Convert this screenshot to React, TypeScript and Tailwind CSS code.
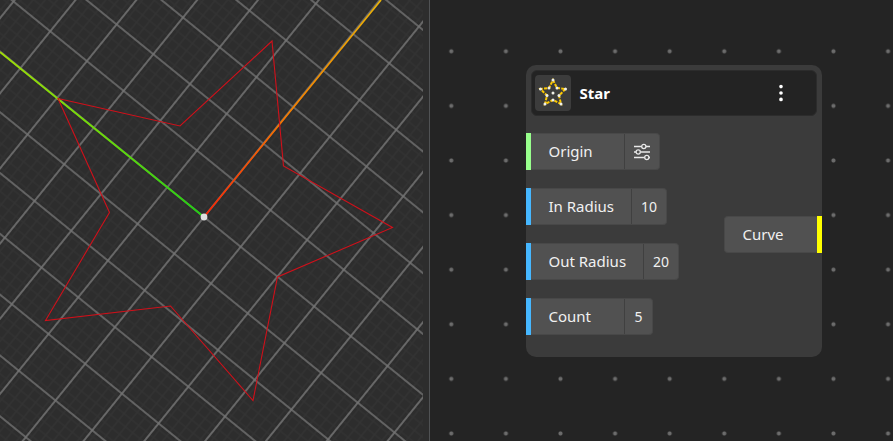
import { EllipsisVertical } from 'lucide-react';

type Port = {
    label: string;
    color: string;
    value?: string;
};

const inputs: Port[] = [
    { label: 'Origin', color: 'bg-[#98ff8c]' },
    { label: 'In Radius', color: 'bg-[#46b7ff]', value: '10' },
    { label: 'Out Radius', color: 'bg-[#46b7ff]', value: '20' },
    { label: 'Count', color: 'bg-[#46b7ff]', value: '5' },
];

const GRID = 'matrix(36.7 29.8 29.7 -36.7 204 217)';

function Viewport() {
    return (
        <div className="w-[48.15%] shrink-0 border-r border-[#505254] bg-[#2d2d2d] pr-1.5">
            <svg
                className="block h-full w-full"
                viewBox="0 0 423 441"
                preserveAspectRatio="xMinYMin slice"
                role="img"
                aria-label="Star curve"
            >
                <defs>
                    <pattern id="minor" width="0.2" height="0.2" patternUnits="userSpaceOnUse" patternTransform={GRID}>
                        <path d="M0 0.1H0.2M0.1 0V0.2" stroke="#323232" strokeWidth="0.034" />
                    </pattern>
                    <pattern id="major" width="1" height="1" patternUnits="userSpaceOnUse" patternTransform={GRID}>
                        <path d="M0 0H1M0 0V1M0 1H1M1 0V1" stroke="#747474" strokeWidth="0.034" />
                    </pattern>
                    <linearGradient id="axisX" gradientUnits="userSpaceOnUse" x1="204" y1="217" x2="381" y2="0">
                        <stop offset="0" stopColor="#ff2000" />
                        <stop offset="0.5" stopColor="#f48000" />
                        <stop offset="1" stopColor="#eab408" />
                    </linearGradient>
                    <linearGradient id="axisY" gradientUnits="userSpaceOnUse" x1="204" y1="217" x2="0" y2="52">
                        <stop offset="0" stopColor="#1fd012" />
                        <stop offset="0.5" stopColor="#6cdc08" />
                        <stop offset="1" stopColor="#a0dc08" />
                    </linearGradient>
                </defs>
                <rect width="423" height="441" fill="url(#minor)" />
                <rect width="423" height="441" fill="url(#major)" />
                <path d="M204 217L381 0" stroke="url(#axisX)" strokeWidth="1.7" />
                <path d="M204 217L0 52" stroke="url(#axisY)" strokeWidth="1.8" />
                <path
                    d="M58 98.5L109.5 212.5L45.5 320.5L170.5 306L253 400.5L277.5 277L392.5 227.5L283.5 166L272 41L180 126Z"
                    fill="none"
                    stroke="#d0101a"
                    strokeWidth="1.1"
                />
                <circle cx="204" cy="217" r="3.4" fill="#e0e0e0" />
            </svg>
        </div>
    );
}

function StarIcon() {
    const outer = [[18, 5], [30.5, 14], [26, 29], [10, 29], [5.5, 14]];
    const inner = [[22, 13], [24, 20.5], [18, 25], [12, 20.5], [14, 13]];

    return (
        <svg className="size-9" viewBox="0 0 36 36" aria-hidden="true">
            <path
                d="M18 5L22 13L30.5 14L24 20.5L26 29L18 25L10 29L12 20.5L5.5 14L14 13Z"
                fill="none"
                stroke="#fcc800"
                strokeWidth="2"
                strokeDasharray="3.2 1.2"
            />
            {[...outer, ...inner, [18, 18]].map(([x, y]) => (
                <circle key={`${x}-${y}`} cx={x} cy={y} r="1.5" fill="#f0f0e8" />
            ))}
        </svg>
    );
}

function SlidersIcon() {
    return (
        <svg className="size-[18px]" viewBox="0 0 18 18" fill="none" stroke="#e8e8e8" strokeWidth="1.3" aria-hidden="true">
            <path d="M1 3.5H8.5M13 3.5H17M1 9H3M7.5 9H17M1 14.5H11.5M16 14.5H17" />
            <circle cx="10.8" cy="3.5" r="2.1" />
            <circle cx="5.2" cy="9" r="2.1" />
            <circle cx="13.8" cy="14.5" r="2.1" />
        </svg>
    );
}

function InputPort({ label, color, value }: Port) {
    return (
        <div className="flex h-[37px] items-stretch">
            <span className={`w-[5px] ${color}`} />
            <div className="flex overflow-hidden rounded-r border border-l-0 border-[#484848] bg-[#515151]">
                <span className="flex min-w-[94px] items-center border-r border-[#404040] px-[17px]">{label}</span>
                {value ? (
                    <button type="button" aria-label={`${label} value`} className="px-[9px] text-sm">
                        {value}
                    </button>
                ) : (
                    <button type="button" aria-label={`${label} settings`} className="px-2">
                        <SlidersIcon />
                    </button>
                )}
            </div>
        </div>
    );
}

function StarNode() {
    return (
        <section className="w-[296px] rounded-[10px] bg-[#3b3b3b] pt-[5px] pb-[22px] text-[15px] text-[#f0f0f0]">
            <header className="mx-[5px] flex h-[46px] items-center gap-2 rounded-md border border-[#2c2c2c] bg-[#232323] pr-6 pl-[3px]">
                <span className="rounded bg-[#3c3c3c]">
                    <StarIcon />
                </span>
                <h2 className="flex-1 font-bold text-white">Star</h2>
                <button type="button" aria-label="Node menu">
                    <EllipsisVertical className="size-[22px] text-white" />
                </button>
            </header>
            <div className="flex items-center justify-between pt-[17px]">
                <div className="flex flex-col items-start gap-[18px]">
                    {inputs.map((port) => (
                        <InputPort key={port.label} {...port} />
                    ))}
                </div>
                <div className="flex h-[37px] items-stretch">
                    <span className="flex items-center rounded-l border border-r-0 border-[#484848] bg-[#515151] pr-[34px] pl-[17px]">
                        Curve
                    </span>
                    <span className="w-[5px] bg-[#ffff00]" />
                </div>
            </div>
        </section>
    );
}

export default function App() {
    return (
        <main className="flex h-screen overflow-hidden bg-[#242424] font-['Noto_Sans','Open_Sans',sans-serif]">
            <Viewport />
            <div className="flex min-w-0 flex-1 items-start justify-center bg-[radial-gradient(circle_at_center,#6c6c6c_1.5px,transparent_2.5px)] bg-size-[54.6px_54.6px] bg-position-[-6px_24px] pt-[65px] pl-[26px]">
                <StarNode />
            </div>
        </main>
    );
}
